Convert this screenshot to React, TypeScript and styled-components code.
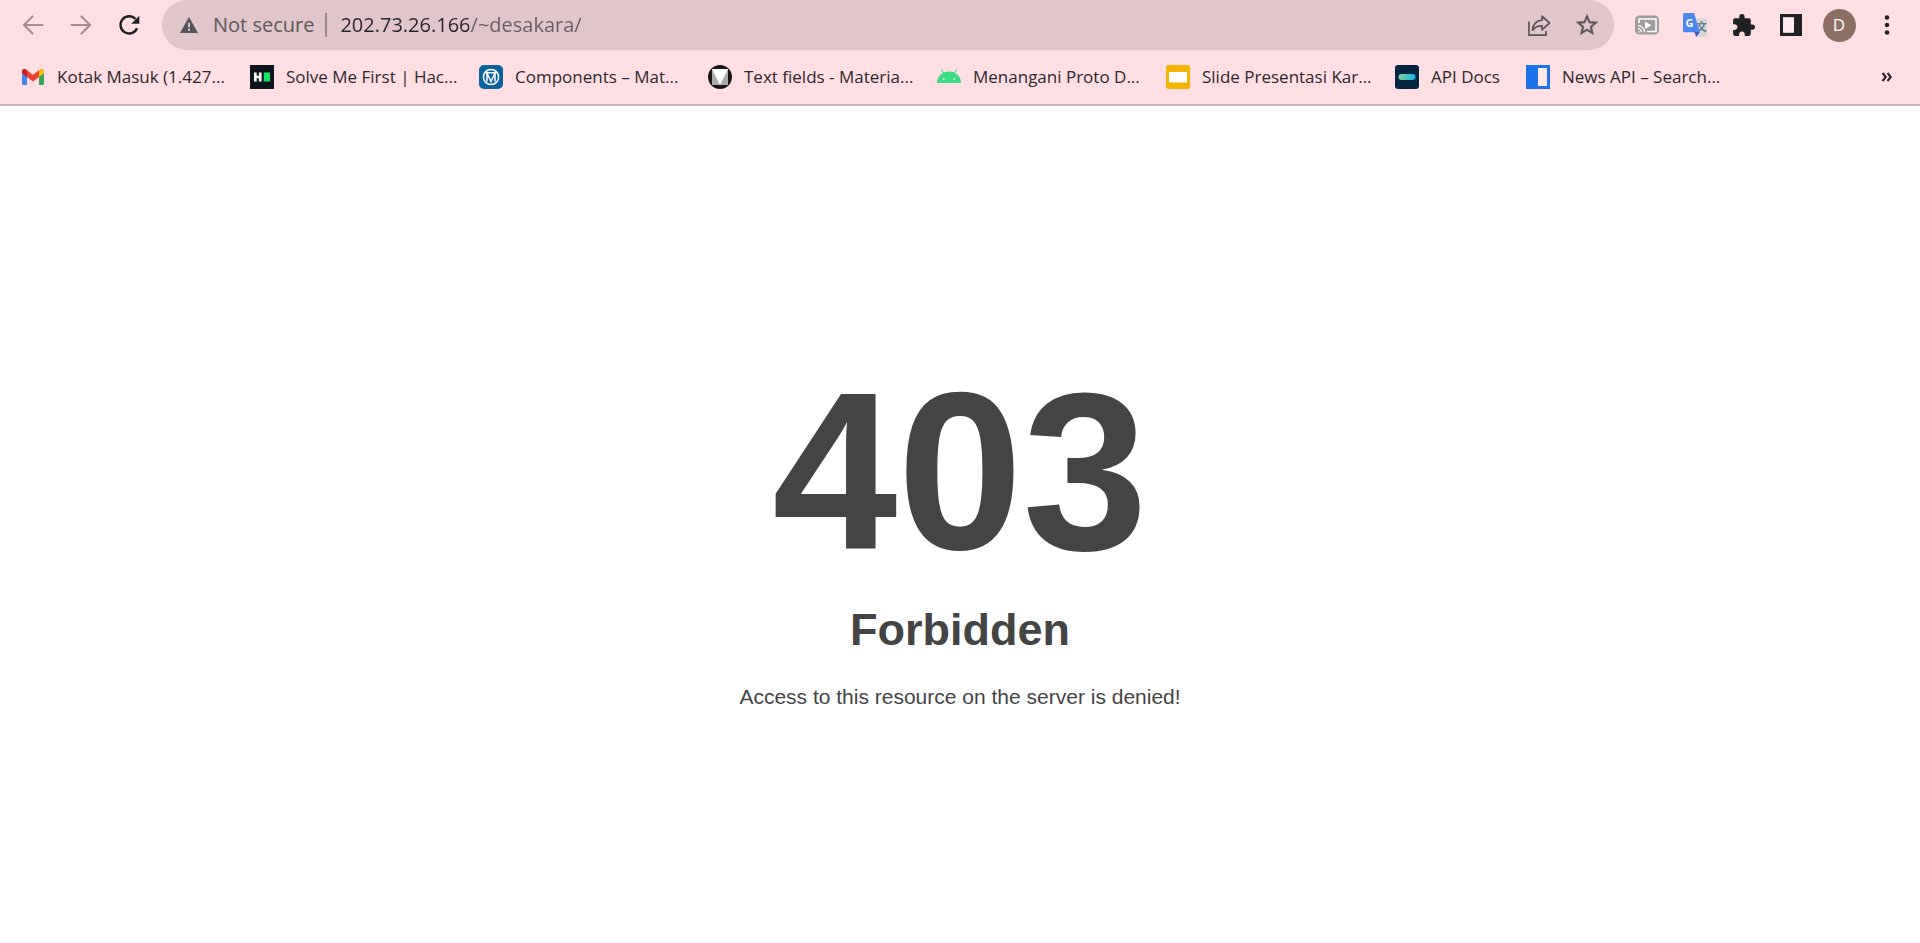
import React from 'react';
import styled, { createGlobalStyle } from 'styled-components';

const GlobalStyle = createGlobalStyle`
  *, *::before, *::after { box-sizing: border-box; }
  body { margin: 0; background: #fff; }
  button, input { font: inherit; color: inherit; border: 0; padding: 0; margin: 0; background: none; }
  button { cursor: pointer; }
  svg { display: block; flex: none; }
`;

const uiFont = `'Open Sans', 'Noto Sans', sans-serif`;

const Page = styled.div`
  display: flex;
  flex-direction: column;
  min-height: 100vh;
`;

const Chrome = styled.header`
  background: #ffdee4;
  border-bottom: 2px solid #cdb3b9;
  color: #202124;
  font-family: ${uiFont};
`;

const Toolbar = styled.div`
  display: flex;
  align-items: center;
  gap: 9px;
  height: 50px;
  padding: 0 9px;
`;

const ButtonGroup = styled.div`
  display: flex;
  flex: none;
`;

const IconButton = styled.button<{ $muted?: boolean }>`
  display: flex;
  align-items: center;
  justify-content: center;
  width: 48px;
  height: 48px;
  color: ${(p) => (p.$muted ? '#a38e93' : '#202124')};
`;

const AddressBar = styled.form`
  display: flex;
  flex: 1;
  align-items: center;
  min-width: 0;
  height: 50px;
  padding: 0 3px 0 18px;
  border-radius: 25px;
  background: #e1c5ca;
  color: #5c5759;
  font-size: 20px;
  line-height: 28px;
`;

const SecurityButton = styled.button`
  display: flex;
  align-items: center;
  flex: none;
  gap: 15px;
  white-space: nowrap;
`;

const Divider = styled.span`
  flex: none;
  width: 2px;
  height: 24px;
  margin: 0 13px 0 11px;
  background: #9c888c;
`;

const UrlInput = styled.input`
  flex: 1;
  min-width: 0;
  height: 28px;
  outline: none;
  background: linear-gradient(to right, #27252a 0 129px, #655b60 129px);
  background-clip: text;
  -webkit-background-clip: text;
  color: transparent;
  caret-color: #202124;
`;

const AddressAction = styled(IconButton)`
  color: #5c5659;
`;

const Avatar = styled.span`
  display: flex;
  align-items: center;
  justify-content: center;
  width: 33px;
  height: 33px;
  border-radius: 50%;
  background: #8d6e63;
  color: #fff;
  font-size: 17px;
  line-height: 24px;
`;

const BookmarkBar = styled.nav`
  display: flex;
  align-items: center;
  height: 54px;
  padding: 0 9px;
`;

const BookmarkList = styled.ul`
  display: flex;
  flex: 1;
  min-width: 0;
  margin: 0;
  padding: 0;
  overflow: hidden;
  list-style: none;
`;

const Bookmark = styled.a<{ $short?: boolean }>`
  display: flex;
  align-items: center;
  gap: 12px;
  width: ${(p) => (p.$short ? '131px' : '229px')};
  height: 36px;
  padding-left: 12px;
  color: #2c272b;
  font-size: 17px;
  line-height: 24px;
  text-decoration: none;
  white-space: nowrap;
`;

const Content = styled.main`
  display: flex;
  flex: 1;
  flex-direction: column;
  align-items: center;
  justify-content: center;
  padding-top: 18px;
  color: #444;
  font-family: 'Liberation Sans', Arial, sans-serif;
  text-align: center;
`;

const Code = styled.h1`
  margin: 0;
  font-size: 225px;
  line-height: 225px;
`;

const Reason = styled.h2`
  margin: 20px 0 30px;
  font-size: 45px;
  line-height: 51px;
`;

const Message = styled.p`
  margin: 0;
  font-size: 21px;
  line-height: 24px;
`;

const BackIcon = () => (
  <svg width="24" height="24" viewBox="0 0 24 24" fill="none" stroke="currentColor" strokeWidth="2.2" strokeLinecap="round" strokeLinejoin="round">
    <path d="M21.5 12H3M11.5 3.5 3 12l8.500 8.500" />
  </svg>
);

const ForwardIcon = () => (
  <svg width="24" height="24" viewBox="0 0 24 24" fill="none" stroke="currentColor" strokeWidth="2.2" strokeLinecap="round" strokeLinejoin="round">
    <path d="M2.500 12H21M12.500 3.500 21 12l-8.500 8.500" />
  </svg>
);

const ReloadIcon = () => (
  <svg width="24" height="24" viewBox="0 0 24 24" fill="none">
    <path d="M20 15.200A8.600 8.600 0 1 1 18.400 6" stroke="currentColor" strokeWidth="2.400" />
    <path d="M22.300 2.700v8h-8z" fill="currentColor" />
  </svg>
);

const WarningIcon = () => (
  <svg width="18" height="18" viewBox="0 0 18 18">
    <path d="M9 1 18 17H0z" fill="#54555a" />
    <path d="M8 6.800h2v4.400H8zM8 12.800h2v2H8z" fill="#e1c5ca" />
  </svg>
);

const ShareIcon = () => (
  <svg width="24" height="24" viewBox="0 0 24 24" fill="none" stroke="currentColor" strokeWidth="1.700">
    <path d="M2 8.500V22.200H19V18" />
    <path d="M15 3.200 22.500 10 15 16.800V12.800C10.500 12.600 7.800 14 5.500 17.200 6 11.500 9 7.700 15 7.200z" strokeLinejoin="round" />
  </svg>
);

const StarIcon = () => (
  <svg width="26" height="26" viewBox="0 0 24 24" fill="currentColor" stroke="currentColor" strokeWidth=".4">
    <path d="m22 9.240-7.190-.62L12 2 9.190 8.630 2 9.240l5.460 4.730L5.820 21 12 17.270 18.180 21l-1.630-7.030zM12 15.400l-3.760 2.270 1-4.280-3.320-2.880 4.380-.38L12 6.100l1.710 4.040 4.380.38-3.320 2.880 1 4.280z" />
  </svg>
);

const CastIcon = () => (
  <svg width="24" height="24" viewBox="0 0 24 24">
    <rect x="0" y="2.500" width="24" height="19" rx="4.500" fill="#a09b9d" />
    <path d="M4 10V6h17v12.500h-9" fill="none" stroke="#fff" strokeWidth="1.600" />
    <path d="M10 8.500v7.500l6.500-3.700z" fill="#fff" />
    <path d="M3 18.700a.8.800 0 0 1 .8.800M3 15.700a3.500 3.500 0 0 1 3.600 3.600M3 12.700a6.500 6.500 0 0 1 6.600 6.600" fill="none" stroke="#fff" strokeWidth="1.300" />
  </svg>
);

const TranslateIcon = () => (
  <svg width="24" height="24" viewBox="0 0 24 24">
    <path d="M9 5.500h13.500A1.500 1.500 0 0 1 24 7v15.500a1.500 1.500 0 0 1-1.500 1.500H15z" fill="#d8d5d8" />
    <text x="13" y="18" fontSize="11" fontWeight="700" fontFamily="'Noto Sans CJK SC', sans-serif" fill="#607d8b">文</text>
    <path d="m11.500 19 5.500 0-3.800 5z" fill="#3f51b5" />
    <path d="M1.500 0H11l6 19.200H1.500A1.500 1.500 0 0 1 0 17.700V1.500A1.500 1.500 0 0 1 1.500 0z" fill="#4a88f0" />
    <text x="2.500" y="13.500" fontSize="11" fontWeight="700" fontFamily="'Open Sans', sans-serif" fill="#fff">G</text>
  </svg>
);

const ExtensionIcon = () => (
  <svg width="25" height="25" viewBox="0 0 24 24" fill="currentColor">
    <path d="M20.500 11H19V7c0-1.100-.9-2-2-2h-4V3.500a2.500 2.500 0 0 0-5 0V5H4c-1.100 0-1.990.9-1.990 2v3.800H3.500c1.490 0 2.700 1.210 2.700 2.700s-1.210 2.700-2.700 2.700H2V20c0 1.100.9 2 2 2h3.800v-1.500c0-1.490 1.210-2.700 2.700-2.700s2.700 1.210 2.700 2.700V22H17c1.100 0 2-.9 2-2v-4h1.500a2.500 2.500 0 0 0 0-5z" />
  </svg>
);

const SidePanelIcon = () => (
  <svg width="22" height="22" viewBox="0 0 22 22">
    <path d="M0 0h22v22H0z" fill="currentColor" />
    <path d="M3 3.200h11v15.600H3z" fill="#ffeaee" />
  </svg>
);

const MenuIcon = () => (
  <svg width="24" height="24" viewBox="0 0 24 24" fill="currentColor">
    <circle cx="12" cy="4.500" r="2.300" />
    <circle cx="12" cy="12" r="2.300" />
    <circle cx="12" cy="19.500" r="2.300" />
  </svg>
);

const OverflowIcon = () => (
  <svg width="12" height="12" viewBox="0 0 12 12" fill="none" stroke="currentColor" strokeWidth="2">
    <path d="m1.500 2 3.300 4-3.300 4M6.500 2l3.300 4-3.300 4" />
  </svg>
);

const GmailIcon = () => (
  <svg width="24" height="24" viewBox="0 0 24 24">
    <path d="M1 8v10.500A1.500 1.500 0 0 0 2.500 20H6v-9z" fill="#4285f4" />
    <path d="M18 11v9h3.500a1.500 1.500 0 0 0 1.500-1.500V8z" fill="#34a853" />
    <path d="M18 6v6l5-3.800V6.500c0-2.400-2.400-3.400-4-2.100z" fill="#fbbc04" />
    <path d="M6 12V5.200l6 4.500 6-4.500V12l-6 4.500z" fill="#ea4335" />
    <path d="M1 6.500v1.700L6 12V5.200l-1-.8C3.400 3.100 1 4.100 1 6.500z" fill="#c5221f" />
  </svg>
);

const HackerRankIcon = () => (
  <svg width="24" height="24" viewBox="0 0 24 24">
    <path d="M0 0h24v24H0z" fill="#0e141e" />
    <path d="M4 7.500h2.700v3.200h2.200V7.500h2.700v9H8.900v-3.300H6.700v3.300H4z" fill="#fff" />
    <path d="M13.800 7.500h6.200v9h-6.200z" fill="#12e664" />
  </svg>
);

const ComponentsIcon = () => (
  <svg width="24" height="24" viewBox="0 0 24 24" fill="none" stroke="#fff">
    <rect width="24" height="24" rx="5" fill="#08629c" stroke="none" />
    <circle cx="12" cy="12" r="7.600" strokeWidth="1.500" />
    <path d="M6.500 7.800h11M8 8v8.500M16 8v8.500M8 8l4 8.500L16 8" strokeWidth="1.500" />
  </svg>
);

const MaterialIcon = () => (
  <svg width="24" height="24" viewBox="0 0 24 24">
    <circle cx="12" cy="12" r="12" fill="#1b1718" />
    <path d="M4 4h16v16H4z" fill="#aaa" />
    <path d="M4 4h16l-8 16z" fill="#fff" />
  </svg>
);

const AndroidIcon = () => (
  <svg width="24" height="24" viewBox="0 0 24 24">
    <path d="M0 18a12 11.500 0 0 1 24 0z" fill="#3ddc84" />
    <path d="m4.500 4.500 2.800 5M19.500 4.500l-2.800 5" stroke="#3ddc84" strokeWidth="1.100" />
    <circle cx="6.700" cy="14" r=".9" fill="#e6fff0" />
    <circle cx="17.300" cy="14" r=".9" fill="#e6fff0" />
  </svg>
);

const SlidesIcon = () => (
  <svg width="24" height="24" viewBox="0 0 24 24">
    <rect width="24" height="24" rx="2.500" fill="#f5b400" />
    <path d="M3 7h18v10.500H3z" fill="#fff" />
  </svg>
);

const ApiDocsIcon = () => (
  <svg width="24" height="24" viewBox="0 0 24 24">
    <defs>
      <linearGradient id="pill">
        <stop offset="0" stopColor="#8bcea0" />
        <stop offset="1" stopColor="#0bb4e2" />
      </linearGradient>
    </defs>
    <rect width="24" height="24" rx="3" fill="#032541" />
    <rect x="3.500" y="9" width="17" height="6" rx="3" fill="url(#pill)" />
  </svg>
);

const NewsIcon = () => (
  <svg width="24" height="24" viewBox="0 0 24 24">
    <path d="M0 0h24v24H0z" fill="#1a73e8" />
    <path d="M12 3h9v18h-9z" fill="#ffe6eb" />
  </svg>
);

const bookmarks = [
  { label: 'Kotak Masuk (1.427...', icon: <GmailIcon /> },
  { label: 'Solve Me First | Hac...', icon: <HackerRankIcon /> },
  { label: 'Components – Mat...', icon: <ComponentsIcon /> },
  { label: 'Text fields - Materia...', icon: <MaterialIcon /> },
  { label: 'Menangani Proto D...', icon: <AndroidIcon /> },
  { label: 'Slide Presentasi Kar...', icon: <SlidesIcon /> },
  { label: 'API Docs', icon: <ApiDocsIcon />, short: true },
  { label: 'News API – Search...', icon: <NewsIcon /> },
];

export default function App() {
  return (
    <Page>
      <GlobalStyle />
      <Chrome>
        <Toolbar>
          <ButtonGroup>
            <IconButton $muted aria-label="Back"><BackIcon /></IconButton>
            <IconButton $muted aria-label="Forward"><ForwardIcon /></IconButton>
            <IconButton aria-label="Reload"><ReloadIcon /></IconButton>
          </ButtonGroup>
          <AddressBar onSubmit={(e) => e.preventDefault()}>
            <SecurityButton type="button">
              <WarningIcon />
              Not secure
            </SecurityButton>
            <Divider />
            <UrlInput aria-label="Address" defaultValue="202.73.26.166/~desakara/" spellCheck={false} />
            <AddressAction type="button" aria-label="Share"><ShareIcon /></AddressAction>
            <AddressAction type="button" aria-label="Bookmark this page"><StarIcon /></AddressAction>
          </AddressBar>
          <ButtonGroup>
            <IconButton aria-label="Cast"><CastIcon /></IconButton>
            <IconButton aria-label="Translate"><TranslateIcon /></IconButton>
            <IconButton aria-label="Extensions"><ExtensionIcon /></IconButton>
            <IconButton aria-label="Side panel"><SidePanelIcon /></IconButton>
            <IconButton aria-label="Profile"><Avatar>D</Avatar></IconButton>
            <IconButton aria-label="Menu"><MenuIcon /></IconButton>
          </ButtonGroup>
        </Toolbar>
        <BookmarkBar aria-label="Bookmarks">
          <BookmarkList>
            {bookmarks.map((b) => (
              <li key={b.label}>
                <Bookmark href="#" $short={b.short}>
                  {b.icon}
                  {b.label}
                </Bookmark>
              </li>
            ))}
          </BookmarkList>
          <IconButton aria-label="More bookmarks"><OverflowIcon /></IconButton>
        </BookmarkBar>
      </Chrome>
      <Content>
        <Code>403</Code>
        <Reason>Forbidden</Reason>
        <Message>Access to this resource on the server is denied!</Message>
      </Content>
    </Page>
  );
}
